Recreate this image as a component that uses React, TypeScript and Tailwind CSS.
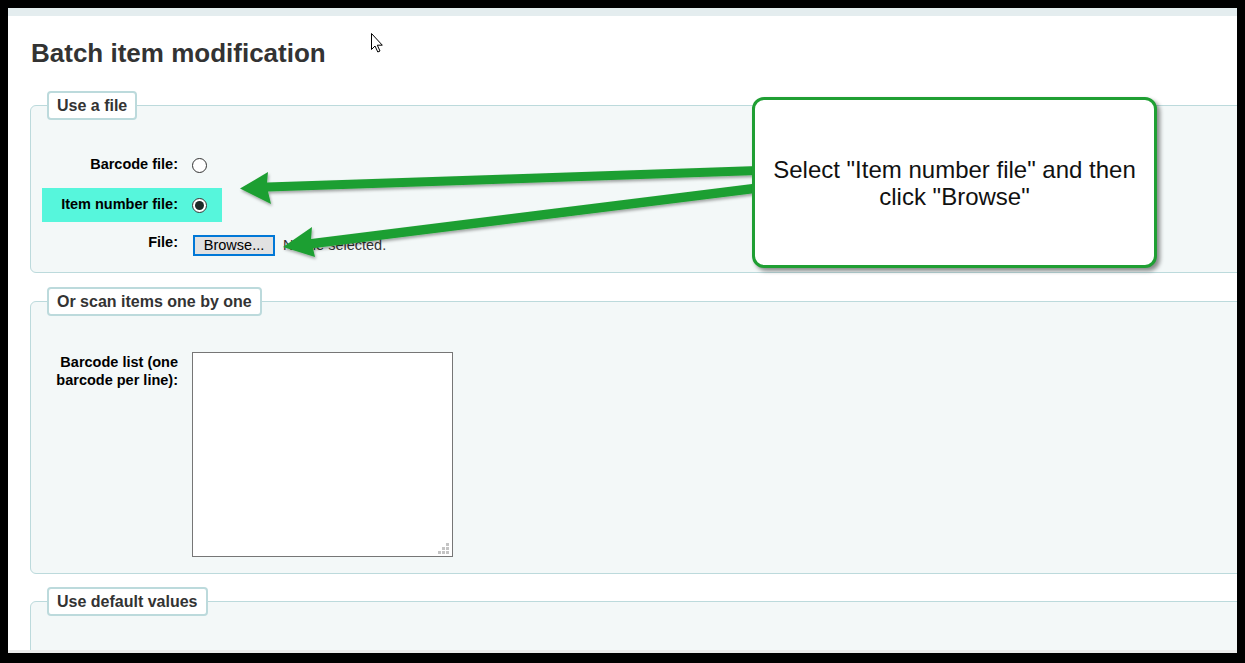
import type { ReactNode } from "react";

// Radio drawn by hand so it looks the same as the screenshot (Windows style)
const Radio = ({ checked }: { checked?: boolean }) => (
    <span className="flex h-[15px] w-[15px] items-center justify-center rounded-full border border-[#333] bg-white">
        {checked && <span className="h-[9px] w-[9px] rounded-full bg-[#1d2b28]" />}
    </span>
);

const Section = ({ title, children, className = "" }: { title: string; children: ReactNode; className?: string }) => (
    <fieldset className={`ml-[22px] mr-[-20px] rounded-[6px] border border-[#bcdadc] bg-[#f3f8f8] ${className}`}>
        <legend className="ml-[16px] rounded-[4px] border-2 border-[#bcdadc] bg-white px-[8px] py-[3px] text-[16px] font-bold leading-[19px] text-[#333]">
            {title}
        </legend>
        {children}
    </fieldset>
);

const App = () => {
    return (
        <div className="h-[663px] w-[1245px] bg-black pb-[10px] pl-[8px] pr-[8px] pt-[8px] font-['Liberation_Sans',Arial,sans-serif] text-[14.5px] text-black">
            <div className="relative flex h-full flex-col overflow-hidden bg-white">
                <div className="h-[8px] bg-[#e4edef]" />

                <div className="flex-1 overflow-hidden">
                    <h1 className="ml-[23px] pt-[22px] text-[26px] font-bold leading-[30px] text-[#333]">Batch item modification</h1>

                    {/* Use a file */}
                    <Section title="Use a file" className="mt-[23px]">
                        <div className="flex flex-col gap-[6px] pb-[10px] pl-[11px] pt-[28px]">
                            <div className="flex h-[34px] w-[180px] items-center">
                                <label className="w-[136px] text-right font-bold">Barcode file:</label>
                                <span className="ml-[14px]"><Radio /></span>
                            </div>
                            <div className="flex h-[34px] w-[180px] items-center bg-[#56f6dc]">
                                <label className="w-[136px] text-right font-bold">Item number file:</label>
                                <span className="ml-[14px]"><Radio checked /></span>
                            </div>
                            <div className="flex h-[34px] items-center">
                                <label className="mb-[5px] w-[136px] text-right font-bold">File:</label>
                                <button className="ml-[15px] flex h-[21px] w-[82px] items-center justify-center border-2 border-[#0078d7] bg-[#e1e1e1] leading-none text-black">
                                    Browse...
                                </button>
                                <span className="ml-[8px] mt-[2px] text-[#333]">No file selected.</span>
                            </div>
                        </div>
                    </Section>

                    {/* Or scan items one by one */}
                    <Section title="Or scan items one by one" className="mt-[14px]">
                        <div className="flex pb-[16px] pl-[11px] pt-[36px]">
                            <label className="w-[136px] pt-[1px] text-right font-bold leading-[18px]">
                                Barcode list (one barcode per line):
                            </label>
                            <div className="relative ml-[14px] h-[205px] w-[261px] border border-[#767676] bg-white">
                                <textarea className="h-full w-full resize-none bg-transparent outline-none" />
                                <svg className="absolute bottom-[2px] right-[3px]" width="11" height="11" viewBox="0 0 11 11">
                                    <g fill="#c4c4c4">
                                        <rect x="8" y="0" width="3" height="3" />
                                        <rect x="4" y="4" width="3" height="3" />
                                        <rect x="8" y="4" width="3" height="3" />
                                        <rect x="0" y="8" width="3" height="3" />
                                        <rect x="4" y="8" width="3" height="3" />
                                        <rect x="8" y="8" width="3" height="3" />
                                    </g>
                                </svg>
                            </div>
                        </div>
                    </Section>

                    {/* Use default values */}
                    <Section title="Use default values" className="mt-[13px]">
                        <div className="h-[60px]" />
                    </Section>
                </div>

                <div className="h-[3px] bg-[#ebebeb]" />

                {/* annotation arrows, page coordinates */}
                <svg className="pointer-events-none absolute left-[-8px] top-[-8px]" width="1245" height="663" viewBox="0 0 1245 663">
                    <defs>
                        <filter id="sh" x="-5%" y="-20%" width="110%" height="160%">
                            <feDropShadow dx="1" dy="2" stdDeviation="1.5" floodColor="#000" floodOpacity="0.35" />
                        </filter>
                    </defs>
                    <g fill="#1f9f33" filter="url(#sh)">
                        <polygon points="758,166 267,182.5 268,172 240,188.5 271,204 268,191.5 758,175" />
                        <polygon points="758,183.3 311,239 312,227 283,247 315,257 313,248.3 758,192.7" />
                    </g>
                    {/* mouse cursor */}
                    <path d="M371.5 33.5 L371.5 49.5 L375 46 L377.8 52 L380 51 L377.3 45.2 L382.3 45.2 Z" fill="#fff" stroke="#000" strokeWidth="1" strokeLinejoin="round" />
                </svg>

                {/* callout */}
                <div className="absolute left-[744px] top-[89px] flex h-[171px] w-[405px] items-center justify-center rounded-[12px] border-[3px] border-[#1f9f33] bg-white text-center text-[24px] leading-[27px] text-[#111] shadow-[3px_3px_4px_rgba(0,0,0,0.45)]">
                    <p>
                        Select "Item number file" and then
                        <br />
                        click "Browse"
                    </p>
                </div>
            </div>
        </div>
    );
};

export default App;
